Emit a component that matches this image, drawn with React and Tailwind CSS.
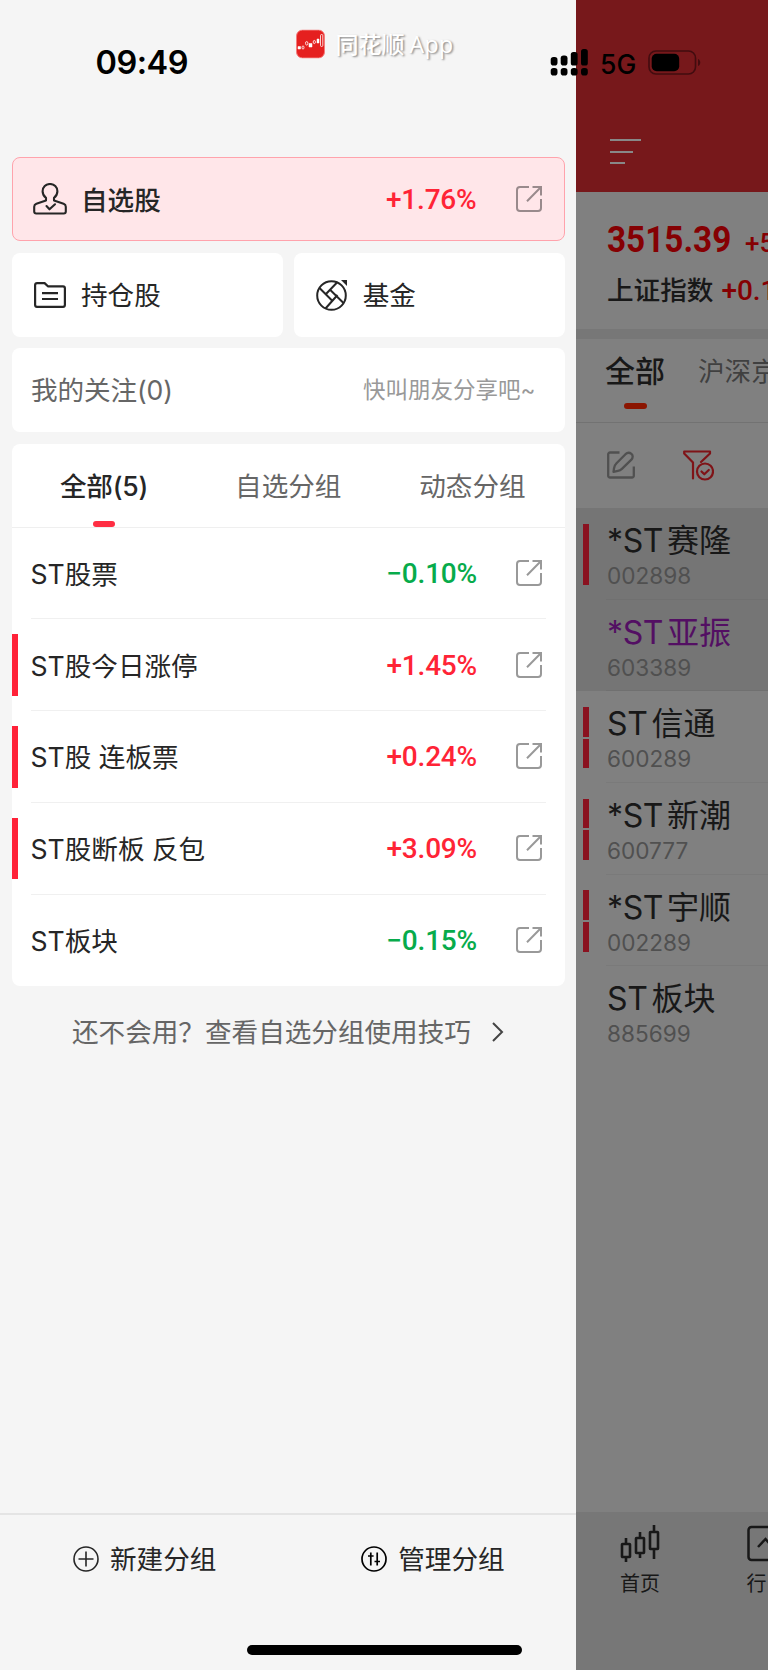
import React from 'react';

const groups = [
  { name: 'ST股票', change: '−0.10%', up: false, marked: false },
  { name: 'ST股今日涨停', change: '+1.45%', up: true, marked: true },
  { name: 'ST股 连板票', change: '+0.24%', up: true, marked: true },
  { name: 'ST股断板 反包', change: '+3.09%', up: true, marked: true },
  { name: 'ST板块', change: '−0.15%', up: false, marked: false },
];

const stocks = [
  { prefix: '*ST', name: '赛隆', code: '002898', bars: 1, active: true },
  { prefix: '*ST', name: '亚振', code: '603389', bars: 0, active: true, purple: true },
  { prefix: 'ST', name: '信通', code: '600289', bars: 2 },
  { prefix: '*ST', name: '新潮', code: '600777', bars: 2 },
  { prefix: '*ST', name: '宇顺', code: '002289', bars: 2 },
  { prefix: 'ST', name: '板块', code: '885699', bars: 0 },
];

function OpenIcon() {
  return (
    <svg className="h-[26px] w-[26px] shrink-0" viewBox="0 0 26 26" fill="none" stroke="currentColor" strokeWidth="2">
      <path d="M13 1H4a3 3 0 0 0-3 3v18a3 3 0 0 0 3 3h18a3 3 0 0 0 3-3v-9" />
      <path d="M16.5 1H25v8.500M25 1L11 15.300" />
    </svg>
  );
}

function UserIcon() {
  return (
    <svg className="h-8 w-[34px]" viewBox="0 0 34 32" fill="none" stroke="currentColor" strokeWidth="2.100" strokeLinejoin="round" strokeLinecap="round">
      <path d="M13 17.500v-2.600c-2.200-1.600-3.400-4-3.400-6.600C9.600 4 12.800 1 17 1s7.400 3 7.400 7.300c0 2.600-1.200 5-3.400 6.600v2.600l9.600 3.300c1.300.5 2.200 1.500 2.200 2.900v4.800c0 1.300-.7 2-2 2H3.200c-1.300 0-2-.7-2-2v-4.800c0-1.400.9-2.400 2.200-2.900z" />
      <path d="M13.500 23l3 3.300 5.500-5" />
    </svg>
  );
}

function FolderIcon() {
  return (
    <svg className="h-[26px] w-8" viewBox="0 0 32 26" fill="none" stroke="currentColor" strokeWidth="2.200" strokeLinejoin="round">
      <path d="M1.100 3a2 2 0 0 1 2-1.900h7.500l3.300 3.200H29a2 2 0 0 1 1.900 2V23a2 2 0 0 1-1.900 1.900H3A2 2 0 0 1 1.100 23z" />
      <path d="M8 11.200h16M8 17h16" />
    </svg>
  );
}

function FundIcon() {
  return (
    <svg className="h-8 w-8" viewBox="0 0 32 32" fill="none" stroke="currentColor" strokeWidth="2">
      <circle cx="15.500" cy="16.500" r="14.300" />
      <path d="M21 3.500L9.500 15.500M3.500 9L16.500 22M9.500 29.500L21.500 16M27.500 24L13.800 10.500" />
      <path d="M25 1h6v6z" fill="currentColor" stroke="none" />
    </svg>
  );
}

function Change({ value, up }) {
  return (
    <span className={`pt-[2px] font-[Roboto,sans-serif] text-[28px] font-medium tracking-[-0.2px] ${up ? 'text-[#ff2436]' : 'text-[#07ab4b]'}`}>
      {value}
    </span>
  );
}

function GroupRow({ group, last }) {
  return (
    <div className="relative h-[91.750px] px-[18.500px]">
      {group.marked && <span className="absolute top-[15px] left-0 h-[61.500px] w-[5.500px] bg-[#ff2138]" />}
      <div className={`flex h-full items-center ${last ? '' : 'border-b border-[#f0f0f0]'}`}>
        <span className="flex-1 pt-[2px] whitespace-pre text-[#262626]">{group.name}</span>
        <Change value={group.change} up={group.up} />
        <span className="mr-[4px] ml-[39px] text-[#999]">
          <OpenIcon />
        </span>
      </div>
    </div>
  );
}

function Drawer() {
  return (
    <aside className="flex w-[575.500px] shrink-0 flex-col bg-[#f5f5f5] text-[26.600px] leading-9">
      <div className="flex flex-col gap-[11.500px] pt-[157px] pr-[11px] pl-[12px]">
        <div className="flex h-[84px] items-center rounded-lg border border-[#ffa3ac] bg-[#ffe6e9] pr-[22px] pl-[20px] text-[#262626]">
          <UserIcon />
          <span className="ml-[14px] flex-1 pt-[2px] font-medium">自选股</span>
          <Change value="+1.76%" up />
          <span className="ml-[39px] text-[#998a8c]">
            <OpenIcon />
          </span>
        </div>

        <div className="flex gap-[11px] text-[#262626]">
          <div className="flex h-[84px] flex-1 items-center rounded-lg bg-white pl-[22px]">
            <FolderIcon />
            <span className="ml-[15px]">持仓股</span>
          </div>
          <div className="flex h-[84px] flex-1 items-center rounded-lg bg-white pl-[22px]">
            <FundIcon />
            <span className="ml-[15px]">基金</span>
          </div>
        </div>

        <div className="flex h-[84px] items-center justify-between rounded-lg bg-white pr-[29px] pl-[19px]">
          <span className="tracking-[-0.1px] text-[#666]">我的关注(0)</span>
          <span className="text-[22.500px] text-[#999]">快叫朋友分享吧~</span>
        </div>

        <div className="rounded-lg bg-white">
          <div className="flex h-[84px] items-center border-b border-[#efefef] text-center text-[#666]">
            <div className="relative flex h-full flex-1 items-center justify-center pt-[2px] font-medium tracking-[-0.2px] text-[#262626]">
              全部(5)
              <span className="absolute bottom-0 h-[6px] w-[22px] rounded-full bg-[#ff2e43]" />
            </div>
            <div className="flex-1 pt-[2px]">自选分组</div>
            <div className="flex-1 pt-[2px]">动态分组</div>
          </div>
          {groups.map((group, i) => (
            <GroupRow key={group.name} group={group} last={i === groups.length - 1} />
          ))}
        </div>
      </div>

      <div className="mt-[28px] flex items-center pl-[72px] text-[#666]">
        <span>还不会用？查看自选分组使用技巧</span>
        <svg className="ml-[21px] h-5 w-3" viewBox="0 0 12 20" fill="none" stroke="#444" strokeWidth="2">
          <path d="M1 1l9 9-9 9" />
        </svg>
      </div>

      <div className="mt-auto flex h-[157px] border-t-2 border-[#e4e4e4] pt-[26px] text-[#262626]">
        <div className="flex h-9 flex-1 items-center pl-[73px]">
          <svg className="h-[26px] w-[26px]" viewBox="0 0 26 26" fill="none" stroke="currentColor" strokeWidth="1.600">
            <circle cx="13" cy="13" r="12" />
            <path d="M13 5.500v15M5.500 13h15" />
          </svg>
          <span className="ml-[11px]">新建分组</span>
        </div>
        <div className="flex h-9 flex-1 items-center pl-[74px]">
          <svg className="h-[26px] w-[26px] text-black" viewBox="0 0 26 26" fill="none" stroke="currentColor" strokeWidth="1.700">
            <circle cx="13" cy="13" r="12" />
            <path d="M9.800 6.500v13M16.200 6.500v13M7 10h5.600M13.500 15.500h5.500" />
          </svg>
          <span className="ml-[11px]">管理分组</span>
        </div>
      </div>
    </aside>
  );
}

function StockRow({ stock, last }) {
  return (
    <div className={`relative flex h-[91.700px] pl-[30.500px] ${stock.active ? 'bg-[#757575]' : ''}`}>
      {stock.bars > 0 && (
        <div className="absolute top-[15.500px] left-[7.500px] flex h-[61.500px] w-[6px] flex-col gap-[2px]">
          <span className="flex-1 bg-[#8a1220]" />
          {stock.bars === 2 && <span className="flex-1 bg-[#8a1220]" />}
        </div>
      )}
      <div className={`flex-1 pt-[13px] pl-[1px] whitespace-nowrap ${last ? '' : 'border-b'} ${stock.active ? 'border-[#707070]' : 'border-[#7a7a7a]'}`}>
        <div className={`flex h-10 items-center text-[32px] leading-10 ${stock.purple ? 'text-[#530f63]' : 'text-[#181818]'}`}>
          <span className="tracking-[-0.400px]">{stock.prefix}</span>
          <span className="ml-[4px]">{stock.name}</span>
        </div>
        <div className="text-[22.600px] leading-[30px] text-[#505050]">{stock.code}</div>
      </div>
    </div>
  );
}

function Quotes() {
  return (
    <main className="flex min-w-0 flex-1 flex-col overflow-hidden bg-[#808080] whitespace-nowrap">
      <header className="h-[192px] shrink-0 bg-[#77181b] pt-[139px] pl-[34.500px]">
        <div className="h-[2px] w-[31px] bg-[#888]" />
        <div className="mt-[9.500px] h-[2px] w-[23px] bg-[#888]" />
        <div className="mt-[9.500px] h-[2px] w-[15px] bg-[#888]" />
      </header>

      <section className="h-[137px] shrink-0 pt-[26px] pl-[31.500px] text-[#850003]">
        <div className="flex h-11 items-baseline font-[Roboto,sans-serif] leading-[44px]">
          <span className="w-[138px] shrink-0 origin-left scale-x-90 text-[37px] font-bold">3515.39</span>
          <span className="text-[26px] font-medium">+5</span>
        </div>
        <div className="mt-[10px] flex h-9 items-center text-[26.600px] leading-9">
          <span className="font-medium text-[#181818]">上证指数</span>
          <span className="ml-[8px] pt-[1px] font-[Roboto,sans-serif] text-[28px] font-medium">+0.1</span>
        </div>
      </section>

      <div className="h-[9.500px] shrink-0 bg-[#777]" />

      <nav className="flex h-[84px] shrink-0 border-b border-[#727272] pl-[29.500px] text-[26.600px]">
        <div className="relative flex h-[66px] items-center justify-center text-[30px] font-medium text-[#181818]">
          全部
          <span className="absolute -bottom-[4px] h-[6px] w-[23px] rounded-full bg-[#8b1500]" />
        </div>
        <div className="ml-[33px] flex h-[66px] items-center text-[#404040]">沪深京</div>
      </nav>

      <div className="flex h-[85.500px] shrink-0 items-center pl-[31.500px]">
        <svg className="h-7 w-7 text-[#505050]" viewBox="0 0 28 28" fill="none" stroke="currentColor" strokeWidth="2.300">
          <path d="M12.500 1.500H3a1.800 1.800 0 0 0-1.800 1.800v21.400A1.800 1.800 0 0 0 3 26.500h22a1.800 1.800 0 0 0 1.800-1.800V15.500" />
          <path d="M6.500 20.800l0.500-3.500c.3-2 1-3.500 2.500-5L18.500 3.200c1.800-1.700 4.200-1.700 5.900-.3s1.700 3.900 0 5.700l-9.500 9.200c-1.200 1.200-2.300 1.800-4 2.100z" strokeLinejoin="round" />
        </svg>
        <svg className="ml-[47.500px] h-[31px] w-[31px] text-[#7f1317]" viewBox="0 0 31 31" fill="none" stroke="currentColor" strokeWidth="2.200" strokeLinejoin="round" strokeLinecap="round">
          <path d="M10 28.500V12.500L1.200 3.500V1.500H27v2L18 12" />
          <circle cx="22" cy="21.500" r="8" />
          <path d="M18.500 21.500l2.800 2.800 4.500-4.300" />
        </svg>
      </div>

      <div>
        {stocks.map((stock, i) => (
          <StockRow key={stock.code} stock={stock} last={i === stocks.length - 1} />
        ))}
      </div>

      <footer className="mt-auto flex h-[158px] shrink-0 bg-[#777] pt-[12px] text-[20px] leading-7 text-[#181818]">
        <div className="ml-[44.500px] flex w-10 shrink-0 flex-col items-center">
          <svg className="h-[38px] w-10" viewBox="0 0 40 38" fill="none" stroke="currentColor" strokeWidth="2.600">
            <rect x="2" y="20" width="8" height="13" rx=".5" />
            <rect x="16" y="14" width="8" height="15" rx=".5" />
            <rect x="30" y="8" width="8" height="17" rx=".5" />
            <path d="M6 14v6M6 33v5M20 8v6M20 29v5M34 1v7M34 25v10" />
          </svg>
          <span className="mt-[8px]">首页</span>
        </div>
        <div className="ml-[86.500px] flex w-10 shrink-0 flex-col items-start">
          <svg className="mt-[1px] h-[37px] w-10" viewBox="0 0 40 37" fill="none" stroke="currentColor" strokeWidth="2.500">
            <rect x="1.500" y="2" width="36" height="33" rx="3" />
            <path d="M11 22l7.500-8 6 7 6-8" />
          </svg>
          <span className="mt-[8px]">行</span>
        </div>
      </footer>
    </main>
  );
}

// System status bar, drawn above both the drawer and the page behind it
function StatusBar() {
  return (
    <div className="absolute top-0 left-0 h-[90px] w-full text-black">
      <span className="absolute top-[43px] left-[95.500px] text-[32.500px] leading-10 font-semibold tracking-[-0.500px]">09:49</span>

      <div className="absolute top-[29px] left-[296px] flex items-center">
        <svg className="h-[29px] w-[29px] -translate-y-[1.500px]" viewBox="0 0 29 29">
          <rect x="0.500" y="0.500" width="28" height="28" rx="6" fill="#e5201f" stroke="#f47c7c" />
          <path d="M2 17h2.500v2.500H2zM13 14h3v3.500h-3zM21 9.500h2v4h-2z" fill="#fff" stroke="#fff" strokeWidth=".5" />
          <g fill="none" stroke="#fff" strokeWidth=".8">
            <ellipse cx="7" cy="18" rx="1" ry="1.600" />
            <ellipse cx="10.700" cy="13.800" rx="1.200" ry="1.800" />
            <ellipse cx="18.300" cy="12.500" rx="1.100" ry="1.600" />
            <rect x="24.500" y="5" width="2.300" height="12" rx="1.100" />
          </g>
        </svg>
        <span className="ml-[10.500px] -translate-y-[2.500px] font-['Open_Sans','Noto_Sans_CJK_SC',sans-serif] text-[23px] leading-8 font-medium text-white [text-shadow:1.500px_1.500px_2px_#888]">
          <span className="font-['Noto_Sans_CJK_SC',sans-serif]">同花顺</span>
          <span className="ml-[5px] tracking-[0.500px]">App</span>
        </span>
      </div>

      <svg className="absolute top-[48px] left-[550px] h-7 w-[39px]" viewBox="0 0 39 28" fill="currentColor">
        <rect x="0.700" y="9" width="6.800" height="8.500" rx="2.800" />
        <rect x="10.700" y="7.500" width="6.800" height="10" rx="2.800" />
        <rect x="20.800" y="4" width="6.800" height="13.500" rx="2.600" />
        <rect x="31" y="1" width="6.800" height="16.500" rx="2.600" />
        <rect x="0.700" y="20" width="6.800" height="7.500" rx="2.800" />
        <rect x="10.700" y="20" width="6.800" height="7.500" rx="2.800" />
        <rect x="20.800" y="20" width="6.800" height="7.500" rx="2.800" />
        <rect x="31" y="20" width="6.800" height="7.500" rx="2.800" />
      </svg>
      <span className="absolute top-[47.500px] left-[600px] text-[26.500px] leading-8 font-medium">5G</span>
      <svg className="absolute top-[50px] left-[648px] h-[25px] w-[54px]" viewBox="0 0 54 25">
        <rect x="1" y="1" width="46.500" height="23" rx="7" fill="none" stroke="#420c0f" strokeWidth="1.600" />
        <rect x="3.700" y="3.700" width="27.500" height="17.500" rx="5" fill="#000" />
        <path d="M50 9c3 1 3 6 0 7z" fill="#420c0f" />
      </svg>
    </div>
  );
}

export default function App() {
  return (
    <div className="relative flex h-[1670px] w-[768px] overflow-hidden bg-[#f5f5f5] font-[Inter,'Noto_Sans_CJK_SC',sans-serif]">
      <Drawer />
      <Quotes />
      <StatusBar />
      <div className="absolute bottom-[15px] left-[246.500px] h-[10px] w-[275px] rounded-full bg-black" />
    </div>
  );
}
